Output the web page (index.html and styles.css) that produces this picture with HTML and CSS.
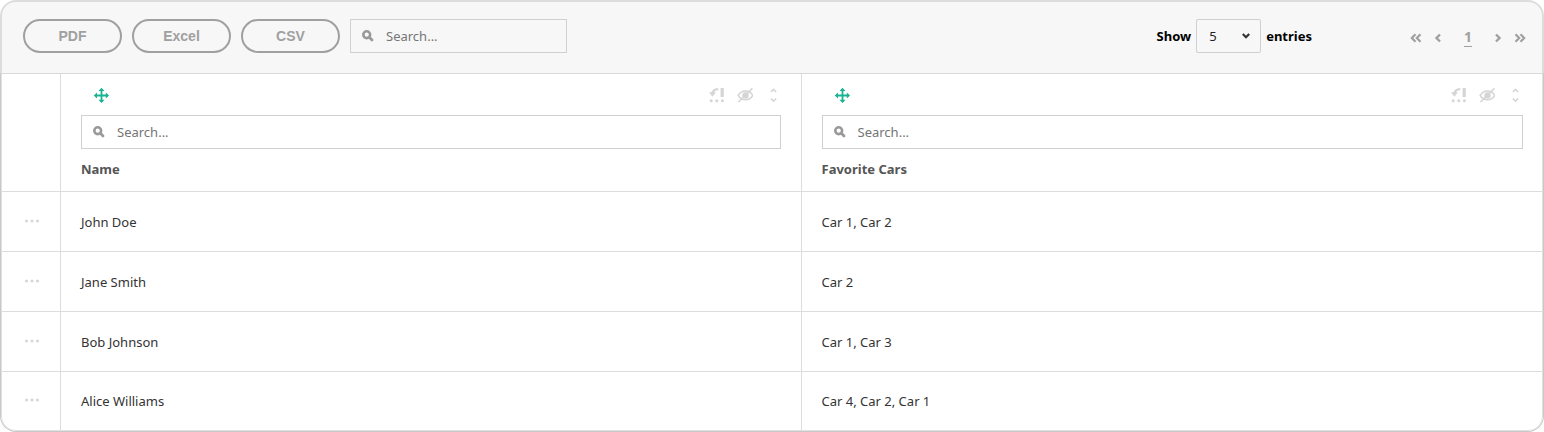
FILE: index.html
```
<!DOCTYPE html>
<html lang="en">
<head>
    <meta charset="UTF-8">
    <meta name="viewport" content="width=device-width, initial-scale=1.0">
    <title>Favorite Cars</title>
    <link rel="stylesheet" href="styles.css">
</head>
<body>
    <!-- Shared icons -->
    <svg class="sprite" aria-hidden="true">
        <symbol id="icon-search" viewBox="0 0 12 12">
            <circle cx="4.7" cy="4.7" r="3.4" fill="none" stroke="currentColor" stroke-width="2.6"/>
            <path d="M7.6 7.6l2.400 2.400" stroke="currentColor" stroke-width="2.8" stroke-linecap="round"/>
        </symbol>
        <symbol id="icon-move" viewBox="0 0 16 16">
            <path d="M8.500 2v13M2 8.500h13" fill="none" stroke="currentColor" stroke-width="1.800"/>
            <path d="M8.500 .8l3 3.200h-6zM8.500 16l3-3.200h-6zM.8 8.500l3.200-3v6zM16 8.500l-3.200-3v6z" fill="currentColor"/>
        </symbol>
        <symbol id="icon-group" viewBox="0 0 16 16">
            <path d="M3.300 7c.3-3 2.500-4.700 6-4.800" fill="none" stroke="currentColor" stroke-width="2.200"/>
            <path d="M0 5.200h7L3.400 9.800zM11.600 1h3.200v9h-3.200z" fill="currentColor"/>
            <circle cx="2.200" cy="13.700" r="1.500" fill="currentColor"/>
            <circle cx="7.800" cy="13.700" r="1.500" fill="currentColor"/>
            <circle cx="13.400" cy="13.700" r="1.500" fill="currentColor"/>
        </symbol>
        <symbol id="icon-hide" viewBox="0 0 16 16">
            <path d="M1.200 8.400C4.500 2.600 12.500 2.600 15.800 8.400 12.500 14.200 4.500 14.200 1.200 8.400z" fill="none" stroke="currentColor" stroke-width="1.600"/>
            <circle cx="8.500" cy="8.400" r="3.200" fill="currentColor"/>
            <path d="M1.400 15L15.400 1.400" stroke="currentColor" stroke-width="1.600"/>
        </symbol>
        <symbol id="icon-sort" viewBox="0 0 16 16">
            <path d="M5.800 5L8.500 2.400 11.200 5M5.800 11.500L8.500 14.100 11.200 11.500" fill="none" stroke="currentColor" stroke-width="1.500"/>
        </symbol>
        <symbol id="icon-dots" viewBox="0 0 16 4">
            <circle cx="2.500" cy="2" r="1.500" fill="currentColor"/>
            <circle cx="8" cy="2" r="1.500" fill="currentColor"/>
            <circle cx="13.500" cy="2" r="1.500" fill="currentColor"/>
        </symbol>
        <symbol id="icon-down" viewBox="0 0 8 6">
            <path d="M.8 1l3.200 3.200L7.200 1" fill="none" stroke="currentColor" stroke-width="2.200"/>
        </symbol>
        <symbol id="icon-prev" viewBox="0 0 8 10">
            <path d="M6 1.500L2.500 5 6 8.500" fill="none" stroke="currentColor" stroke-width="2.400"/>
        </symbol>
        <symbol id="icon-next" viewBox="0 0 8 10">
            <path d="M2 1.500L5.500 5 2 8.500" fill="none" stroke="currentColor" stroke-width="2.400"/>
        </symbol>
        <symbol id="icon-first" viewBox="0 0 12 10">
            <path d="M5.500 1.200L1.800 5l3.700 3.800M10.500 1.200L6.800 5l3.700 3.800" fill="none" stroke="currentColor" stroke-width="2.200"/>
        </symbol>
        <symbol id="icon-last" viewBox="0 0 12 10">
            <path d="M1.500 1.200L5.200 5 1.500 8.800M6.500 1.200L10.200 5 6.500 8.800" fill="none" stroke="currentColor" stroke-width="2.200"/>
        </symbol>
    </svg>

    <div class="grid">
        <div class="toolbar">
            <button type="button" class="export">PDF</button>
            <button type="button" class="export">Excel</button>
            <button type="button" class="export">CSV</button>
            <div class="search search-global">
                <svg class="search-icon"><use href="#icon-search"/></svg>
                <input type="text" placeholder="Search..." aria-label="Search all columns">
            </div>

            <div class="page-size">
                <label for="pageSize">Show</label>
                <div class="select">
                    <select id="pageSize">
                        <option>5</option>
                        <option>10</option>
                        <option>25</option>
                    </select>
                    <svg class="select-icon"><use href="#icon-down"/></svg>
                </div>
                <label for="pageSize">entries</label>
            </div>

            <nav class="pager" aria-label="Pages">
                <button type="button" aria-label="First page"><svg class="icon-double"><use href="#icon-first"/></svg></button>
                <button type="button" aria-label="Previous page"><svg class="icon-single"><use href="#icon-prev"/></svg></button>
                <a href="#" class="page">1</a>
                <button type="button" aria-label="Next page"><svg class="icon-single"><use href="#icon-next"/></svg></button>
                <button type="button" aria-label="Last page"><svg class="icon-double"><use href="#icon-last"/></svg></button>
            </nav>
        </div>

        <div class="table-wrap">
            <table>
                <thead>
                    <tr>
                        <th class="menu"></th>
                        <th>
                            <div class="tools">
                                <button type="button" class="move" aria-label="Move column"><svg><use href="#icon-move"/></svg></button>
                                <button type="button" aria-label="Group column"><svg><use href="#icon-group"/></svg></button>
                                <button type="button" aria-label="Hide column"><svg><use href="#icon-hide"/></svg></button>
                                <button type="button" aria-label="Sort column"><svg><use href="#icon-sort"/></svg></button>
                            </div>
                            <div class="search">
                                <svg class="search-icon"><use href="#icon-search"/></svg>
                                <input type="text" placeholder="Search..." aria-label="Search name">
                            </div>
                            <div class="title">Name</div>
                        </th>
                        <th>
                            <div class="tools">
                                <button type="button" class="move" aria-label="Move column"><svg><use href="#icon-move"/></svg></button>
                                <button type="button" aria-label="Group column"><svg><use href="#icon-group"/></svg></button>
                                <button type="button" aria-label="Hide column"><svg><use href="#icon-hide"/></svg></button>
                                <button type="button" aria-label="Sort column"><svg><use href="#icon-sort"/></svg></button>
                            </div>
                            <div class="search">
                                <svg class="search-icon"><use href="#icon-search"/></svg>
                                <input type="text" placeholder="Search..." aria-label="Search favorite cars">
                            </div>
                            <div class="title">Favorite Cars</div>
                        </th>
                    </tr>
                </thead>
                <tbody>
                    <tr>
                        <td class="menu"><button type="button" aria-label="Row menu"><svg><use href="#icon-dots"/></svg></button></td>
                        <td>John Doe</td>
                        <td>Car 1, Car 2</td>
                    </tr>
                    <tr>
                        <td class="menu"><button type="button" aria-label="Row menu"><svg><use href="#icon-dots"/></svg></button></td>
                        <td>Jane Smith</td>
                        <td>Car 2</td>
                    </tr>
                    <tr>
                        <td class="menu"><button type="button" aria-label="Row menu"><svg><use href="#icon-dots"/></svg></button></td>
                        <td>Bob Johnson</td>
                        <td>Car 1, Car 3</td>
                    </tr>
                    <tr>
                        <td class="menu"><button type="button" aria-label="Row menu"><svg><use href="#icon-dots"/></svg></button></td>
                        <td>Alice Williams</td>
                        <td>Car 4, Car 2, Car 1</td>
                    </tr>
                </tbody>
            </table>
        </div>
    </div>
</body>
</html>
```
FILE: styles.css
```
* {
    box-sizing: border-box;
}

body {
    margin: 0;
    background: #fff;
    color: #333;
    font-family: "Segoe UI", "Noto Sans", sans-serif;
    font-size: 13px;
    line-height: 20px;
}

button {
    padding: 0;
    border: none;
    background: none;
    color: inherit;
    cursor: pointer;
}

svg {
    display: block;
}

.sprite {
    display: none;
}

/* Toolbar */
.toolbar {
    display: flex;
    align-items: center;
    gap: 10px;
    padding: 17px 16px 20px 21px;
    background: #f7f7f7;
    border: 2px solid #ddd;
    border-bottom: none;
    border-radius: 16px 16px 0 0;
}

.export {
    width: 99px;
    height: 34px;
    border: 2px solid #a0a0a0;
    border-radius: 17px;
    color: #a0a0a0;
    font-family: "Liberation Sans", Arial, sans-serif;
    font-size: 14px;
    font-weight: bold;
}

.search {
    display: flex;
    align-items: center;
    height: 34px;
    padding-left: 11px;
    border: 1px solid #d0d0d0;
}

.search-global {
    width: 217px;
}

.search-icon {
    flex: none;
    width: 12px;
    height: 12px;
    color: #999;
}

.search input {
    flex: 1;
    min-width: 0;
    height: 32px;
    padding: 0 12px;
    border: none;
    outline: none;
    background: none;
    color: #333;
    font: inherit;
    font-weight: normal;
}

.search input::placeholder {
    color: #757575;
}

.page-size {
    display: flex;
    align-items: center;
    gap: 5px;
    margin-left: auto;
    color: #000;
    font-weight: bold;
}

.select {
    position: relative;
}

.select select {
    display: block;
    width: 65px;
    height: 34px;
    padding: 0 12px;
    appearance: none;
    border: 1px solid #d0d0d0;
    border-radius: 2px;
    background: none;
    color: #222;
    font: inherit;
    font-weight: normal;
}

.select-icon {
    position: absolute;
    top: 14px;
    right: 11px;
    width: 8px;
    height: 6px;
    color: #333;
    pointer-events: none;
}

.pager {
    display: flex;
    align-items: center;
    gap: 12px;
    margin-left: 88px;
    padding-top: 3px;
    color: #a0a0a0;
}

.icon-double {
    width: 12px;
    height: 10px;
}

.icon-single {
    width: 8px;
    height: 10px;
}

.page {
    margin: 0 10px;
    border-bottom: 1px solid #a0a0a0;
    color: #a0a0a0;
    font-size: 14px;
    font-weight: bold;
    line-height: 18px;
    text-decoration: none;
}

/* Table */
.table-wrap {
    border: 1px solid #c8c8c8;
    border-top-color: #d8d8d8;
    border-radius: 0 0 16px 16px;
}

table {
    width: 100%;
    table-layout: fixed;
    border: 1px solid #e2e2e2;
    border-top: none;
    border-radius: 0 0 15px 15px;
    border-collapse: separate;
    border-spacing: 0;
}

th,
td {
    padding: 0 20px;
    border-right: 1px solid #ddd;
    border-bottom: 1px solid #ddd;
    text-align: left;
}

th:last-child,
td:last-child {
    padding-right: 19px;
    border-right: none;
}

th {
    padding-top: 13px;
    padding-bottom: 12px;
}

td {
    height: 60px;
}

tr:last-child td {
    height: 58px;
    border-bottom: none;
}

.menu {
    width: 59px;
    padding: 0;
    color: #d5d5d5;
}

.menu svg {
    width: 16px;
    height: 4px;
    margin: 0 22px 4px;
}

.tools {
    display: flex;
    gap: 12px;
    padding: 0 0 12px 12px;
    color: #d5d5d5;
}

.tools svg {
    width: 16px;
    height: 16px;
}

.tools .move {
    margin-right: auto;
    color: #1ab394;
}

.title {
    margin-top: 10px;
    color: #555;
}
```
